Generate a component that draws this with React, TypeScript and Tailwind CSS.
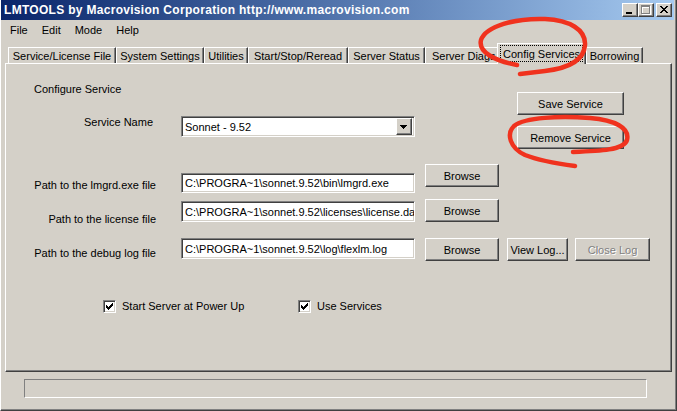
import React from "react";

const raised =
  "bg-[#D4D0C8] border border-t-white border-l-white border-r-[#404040] border-b-[#404040] shadow-[inset_-1px_-1px_0_#808080]";
const sunken =
  "bg-white border border-t-[#808080] border-l-[#808080] border-r-white border-b-white shadow-[inset_1px_1px_0_#404040,inset_-1px_-1px_0_#D4D0C8]";

function Btn({ label, className = "", disabled = false }: { label: string; className?: string; disabled?: boolean }) {
  return (
    <div className={`${raised} h-[23px] flex items-center justify-center ${className}`}>
      <span className={disabled ? "text-[#808080] [text-shadow:1px_1px_0_#ffffff]" : ""}>{label}</span>
    </div>
  );
}

function Field({ value, className = "" }: { value: string; className?: string }) {
  return (
    <div className={`${sunken} w-[234px] flex items-center pl-[3px] overflow-hidden whitespace-nowrap ${className}`}>
      {value}
    </div>
  );
}

function Check({ label, className = "" }: { label: string; className?: string }) {
  return (
    <div className={`flex items-center ${className}`}>
      <div className={`${sunken} w-[13px] h-[13px] relative`}>
        <svg width="7" height="7" viewBox="0 0 7 7" className="absolute left-[2px] top-[2px]" shapeRendering="crispEdges">
          <path
            fill="#000"
            d="M6 0h1v1h-1z M5 1h2v1h-2z M0 2h1v1h-1z M4 2h3v1h-3z M0 3h2v1h-2z M3 3h3v1h-3z M0 4h5v1h-5z M1 5h3v1h-3z M2 6h1v1h-1z"
          />
        </svg>
      </div>
      <span className="ml-[6px]">{label}</span>
    </div>
  );
}

function Tab({ label, w }: { label: string; w: string }) {
  return (
    <div
      className={`h-[16px] ${w} bg-[#D4D0C8] border-t border-l border-r border-t-white border-l-white border-r-[#404040] shadow-[inset_-1px_0_0_#808080] flex items-center justify-center whitespace-nowrap overflow-hidden`}
    >
      {label}
    </div>
  );
}

export default function App() {
  return (
    <div className="relative w-[677px] h-[411px] overflow-hidden bg-[#D4D0C8] font-['Liberation_Sans',Arial,sans-serif] text-[11px] leading-[14px] text-black">
      <div className="h-full flex flex-col border-l border-l-white border-r border-b border-r-[#404040] border-b-[#404040] shadow-[inset_-1px_-1px_0_#808080]">
        {/* Title bar */}
        <div className="h-[20px] flex items-center bg-linear-to-r from-[#0A246A] to-[#A6CAF0] mr-[2px]">
          <span className="pl-[3px] text-white font-bold text-[12px] tracking-[0.3px] whitespace-nowrap">
            LMTOOLS by Macrovision Corporation http://www.macrovision.com
          </span>
          <div className="ml-auto mr-[2px] flex items-center">
            <div className={`${raised} w-[16px] h-[14px] relative`}>
              <svg width="6" height="2" className="absolute left-[3px] top-[8px]" shapeRendering="crispEdges">
                <rect x="0" y="0" width="6" height="2" fill="#000" />
              </svg>
            </div>
            <div className={`${raised} w-[16px] h-[14px] relative`}>
              <svg width="10" height="10" className="absolute left-[2px] top-[1px]" shapeRendering="crispEdges">
                <path fill="#fff" d="M1 1h9v2h-9z M1 1h1v9h-1z M9 1h1v9h-1z M1 9h9v1h-9z" />
                <path fill="#808080" d="M0 0h9v2h-9z M0 0h1v9h-1z M8 0h1v9h-1z M0 8h9v1h-9z" />
              </svg>
            </div>
            <div className={`${raised} w-[16px] h-[14px] relative ml-[2px]`}>
              <svg width="8" height="7" className="absolute left-[3px] top-[2px]" shapeRendering="crispEdges">
                <path
                  fill="#000"
                  d="M0 0h2v1h-2z M6 0h2v1h-2z M1 1h2v1h-2z M5 1h2v1h-2z M2 2h4v1h-4z M3 3h2v1h-2z M2 4h4v1h-4z M1 5h2v1h-2z M5 5h2v1h-2z M0 6h2v1h-2z M6 6h2v1h-2z"
                />
              </svg>
            </div>
          </div>
        </div>

        {/* Menu bar */}
        <div className="h-[19px] flex items-center pl-[2px]">
          <span className="px-[7px]">File</span>
          <span className="px-[7px]">Edit</span>
          <span className="px-[7px]">Mode</span>
          <span className="px-[7px]">Help</span>
        </div>

        <div className="h-[4px]" />

        {/* Tabs */}
        <div className="h-[20px] flex items-end pl-[7px]">
          <Tab label="Service/License File" w="w-[108px]" />
          <Tab label="System Settings" w="w-[88px]" />
          <Tab label="Utilities" w="w-[44px]" />
          <Tab label="Start/Stop/Reread" w="w-[100px]" />
          <Tab label="Server Status" w="w-[77px]" />
          <div className="h-[16px] w-[72px] bg-[#D4D0C8] border-t border-l border-t-white border-l-white whitespace-nowrap overflow-hidden pl-[6px] flex items-center">
            Server Diags
          </div>
          <div className="relative z-10 h-[21px] w-[89px] mb-[-1px] bg-[#D4D0C8] border-t border-l border-r border-t-white border-l-white border-r-[#404040] shadow-[inset_-1px_0_0_#808080] px-[2px] pt-[1px] pb-[2px]">
            <div className="h-full border border-dotted border-black flex items-center justify-center whitespace-nowrap">
              Config Services
            </div>
          </div>
          <Tab label="Borrowing" w="w-[57px]" />
        </div>

        {/* Panel */}
        <div className="ml-[4px] w-[667px] h-[309px] border-t border-l border-t-white border-l-white border-r border-b border-r-[#404040] border-b-[#404040] shadow-[inset_-1px_-1px_0_#808080] flex flex-col">
          {/* Section 1 */}
          <div className="flex">
            <div className="w-[409px] flex flex-col">
              <div className="pl-[28px] mt-[18px]">Configure Service</div>
              <div className="flex items-start mt-[19px]">
                <div className="w-[147px] text-right">Service Name</div>
                <div className={`${sunken} ml-[28px] mt-[1px] w-[234px] h-[21px] flex items-center pl-[3px] pr-[2px]`}>
                  <span className="flex-1">Sonnet - 9.52</span>
                  <div className={`${raised} w-[16px] h-[17px] relative`}>
                    <svg width="7" height="4" className="absolute left-[3px] top-[6px]" shapeRendering="crispEdges">
                      <path fill="#000" d="M0 0h7v1h-7z M1 1h5v1h-5z M2 2h3v1h-3z M3 3h1v1h-1z" />
                    </svg>
                  </div>
                </div>
              </div>
            </div>
            <div className="ml-[102px] pt-[28px] flex flex-col">
              <Btn label="Save Service" className="w-[107px]" />
              <Btn label="Remove Service" className="w-[107px] mt-[11px]" />
            </div>
          </div>

          {/* Row lmgrd */}
          <div className="flex items-start mt-[15px]">
            <div className="w-[150px] text-right mt-[14px]">Path to the lmgrd.exe file</div>
            <Field value="C:\PROGRA~1\sonnet.9.52\bin\lmgrd.exe" className="ml-[25px] mt-[9px] h-[20px]" />
            <Btn label="Browse" className="ml-[10px] w-[74px]" />
          </div>

          {/* Row license */}
          <div className="flex items-start mt-[6px]">
            <div className="w-[150px] text-right mt-[13px]">Path to the license file</div>
            <Field value="C:\PROGRA~1\sonnet.9.52\licenses\license.dat" className="ml-[25px] mt-[2px] h-[21px]" />
            <Btn label="Browse" className="ml-[10px] w-[74px]" />
          </div>

          {/* Row debug */}
          <div className="flex items-start mt-[12px]">
            <div className="w-[150px] text-right mt-[8px]">Path to the debug log file</div>
            <Field value="C:\PROGRA~1\sonnet.9.52\log\flexlm.log" className="ml-[25px] h-[21px]" />
            <Btn label="Browse" className="ml-[10px] w-[74px]" />
            <Btn label="View Log..." className="ml-[8px] w-[61px]" />
            <Btn label="Close Log" className="ml-[7px] w-[75px]" disabled />
          </div>

          {/* Checkboxes */}
          <div className="flex items-center mt-[38px] pl-[97px]">
            <Check label="Start Server at Power Up" className="w-[195px]" />
            <Check label="Use Services" />
          </div>
        </div>

        {/* Status bar */}
        <div className="mt-[7px] ml-[23px] w-[623px] h-[19px] border border-t-[#808080] border-l-[#808080] border-r-white border-b-white" />
      </div>

      {/* Red annotations */}
      <svg className="absolute inset-0 pointer-events-none z-20" width="677" height="411" viewBox="0 0 677 411">
        <path
          d="M517 65 C495 61, 478 52, 481 40 C486 26, 515 18, 545 19 C570 20, 586 30, 585 45 C584 60, 570 68, 545 71 L520 74"
          fill="none"
          stroke="#F0321E"
          strokeWidth="4.5"
          strokeLinecap="round"
          strokeLinejoin="round"
        />
        <path
          d="M573 152 C600 151, 624 150, 627 140 C630 128, 615 120, 590 118 C560 116, 525 117, 514 126 C506 134, 510 148, 525 155 C540 161, 560 164, 575 166"
          fill="none"
          stroke="#F0321E"
          strokeWidth="4.5"
          strokeLinecap="round"
          strokeLinejoin="round"
        />
      </svg>
    </div>
  );
}
